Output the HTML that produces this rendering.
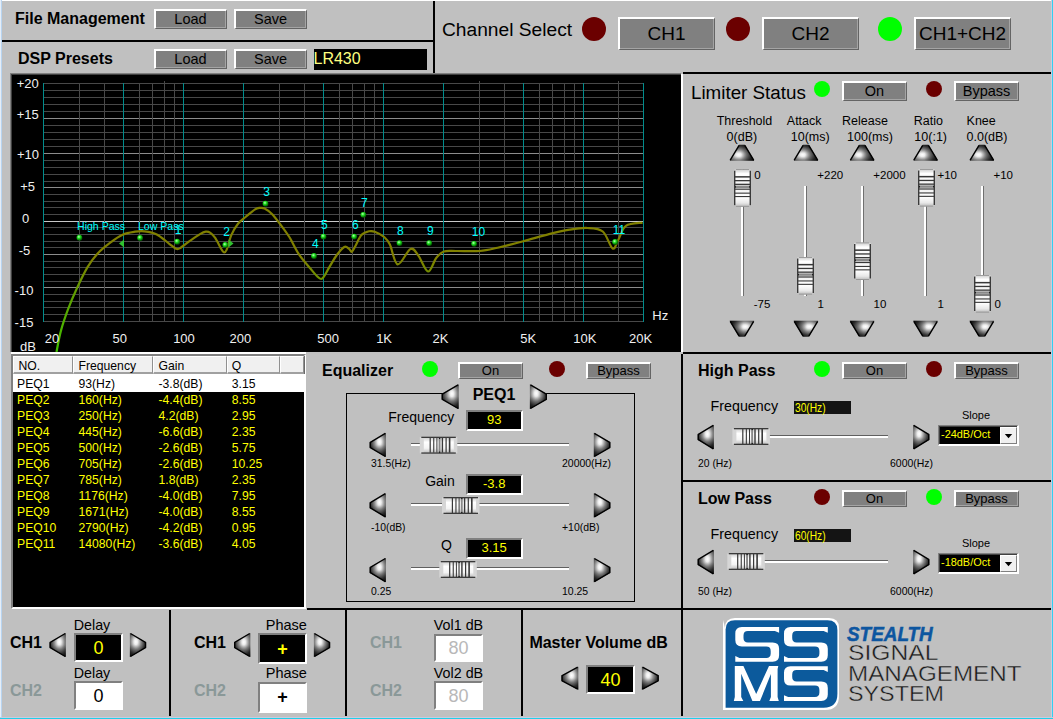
<!DOCTYPE html><html><head><meta charset="utf-8"><style>
html,body{margin:0;padding:0;}
body{width:1053px;height:719px;position:relative;overflow:hidden;background:#c0c0c0;font-family:"Liberation Sans",sans-serif;}
body>div{position:absolute;z-index:2;}
.t{white-space:nowrap;}
svg{position:absolute;left:0;top:0;}
</style></head><body>
<svg width="1053" height="719" style="z-index:1"><rect x="43" y="83" width="601" height="1" fill="#484848"/><rect x="43" y="90" width="601" height="1" fill="#484848"/><rect x="43" y="97" width="601" height="1" fill="#484848"/><rect x="43" y="104" width="601" height="1" fill="#484848"/><rect x="43" y="111" width="601" height="1" fill="#484848"/><rect x="43" y="118" width="601" height="1" fill="#8c8c8c"/><rect x="43" y="125" width="601" height="1" fill="#484848"/><rect x="43" y="132" width="601" height="1" fill="#484848"/><rect x="43" y="139" width="601" height="1" fill="#484848"/><rect x="43" y="146" width="601" height="1" fill="#484848"/><rect x="43" y="153" width="601" height="1" fill="#8c8c8c"/><rect x="43" y="160" width="601" height="1" fill="#484848"/><rect x="43" y="167" width="601" height="1" fill="#484848"/><rect x="43" y="174" width="601" height="1" fill="#484848"/><rect x="43" y="181" width="601" height="1" fill="#484848"/><rect x="43" y="187" width="601" height="1" fill="#8c8c8c"/><rect x="43" y="194" width="601" height="1" fill="#484848"/><rect x="43" y="201" width="601" height="1" fill="#484848"/><rect x="43" y="207" width="601" height="1" fill="#484848"/><rect x="43" y="214" width="601" height="1" fill="#484848"/><rect x="43" y="221" width="601" height="1" fill="#c8c8c8"/><rect x="43" y="227" width="601" height="1" fill="#484848"/><rect x="43" y="234" width="601" height="1" fill="#484848"/><rect x="43" y="241" width="601" height="1" fill="#484848"/><rect x="43" y="247" width="601" height="1" fill="#484848"/><rect x="43" y="254" width="601" height="1" fill="#8c8c8c"/><rect x="43" y="261" width="601" height="1" fill="#484848"/><rect x="43" y="267" width="601" height="1" fill="#484848"/><rect x="43" y="274" width="601" height="1" fill="#484848"/><rect x="43" y="281" width="601" height="1" fill="#484848"/><rect x="43" y="287" width="601" height="1" fill="#8c8c8c"/><rect x="43" y="294" width="601" height="1" fill="#484848"/><rect x="43" y="301" width="601" height="1" fill="#484848"/><rect x="43" y="307" width="601" height="1" fill="#484848"/><rect x="43" y="314" width="601" height="1" fill="#484848"/><rect x="43" y="321" width="601" height="1" fill="#484848"/><rect x="43" y="83" width="1" height="239" fill="#008c8c"/><rect x="79" y="83" width="1" height="239" fill="#484848"/><rect x="104" y="83" width="1" height="239" fill="#484848"/><rect x="123" y="83" width="1" height="239" fill="#008c8c"/><rect x="139" y="83" width="1" height="239" fill="#484848"/><rect x="152" y="83" width="1" height="239" fill="#484848"/><rect x="164" y="83" width="1" height="239" fill="#484848"/><rect x="174" y="83" width="1" height="239" fill="#484848"/><rect x="183" y="83" width="1" height="239" fill="#008c8c"/><rect x="243" y="83" width="1" height="239" fill="#008c8c"/><rect x="279" y="83" width="1" height="239" fill="#484848"/><rect x="304" y="83" width="1" height="239" fill="#484848"/><rect x="323" y="83" width="1" height="239" fill="#008c8c"/><rect x="339" y="83" width="1" height="239" fill="#484848"/><rect x="352" y="83" width="1" height="239" fill="#484848"/><rect x="364" y="83" width="1" height="239" fill="#484848"/><rect x="374" y="83" width="1" height="239" fill="#484848"/><rect x="383" y="83" width="1" height="239" fill="#008c8c"/><rect x="443" y="83" width="1" height="239" fill="#008c8c"/><rect x="479" y="83" width="1" height="239" fill="#484848"/><rect x="504" y="83" width="1" height="239" fill="#484848"/><rect x="523" y="83" width="1" height="239" fill="#008c8c"/><rect x="539" y="83" width="1" height="239" fill="#484848"/><rect x="552" y="83" width="1" height="239" fill="#484848"/><rect x="564" y="83" width="1" height="239" fill="#484848"/><rect x="574" y="83" width="1" height="239" fill="#484848"/><rect x="583" y="83" width="1" height="239" fill="#008c8c"/><rect x="618" y="83" width="1" height="239" fill="#484848"/><rect x="643" y="83" width="1" height="239" fill="#008c8c"/><rect x="164" y="81" width="1" height="2" fill="#484848"/><rect x="479" y="81" width="1" height="2" fill="#484848"/><rect x="618" y="81" width="1" height="2" fill="#484848"/><defs><linearGradient id="cg" x1="0" y1="0" x2="0" y2="1" gradientUnits="objectBoundingBox"><stop offset="0" stop-color="#808000"/><stop offset="0.35" stop-color="#808000"/><stop offset="0.6" stop-color="#60a000"/><stop offset="1" stop-color="#40c000"/></linearGradient></defs><path d="M56.5,351.9 C57.23,348.40 59.00,337.93 60.9,330.9 C62.80,323.87 65.25,316.77 67.9,309.7 C70.55,302.63 73.55,295.55 76.8,288.5 C80.05,281.45 83.88,273.28 87.4,267.4 C90.92,261.52 94.08,257.33 97.9,253.2 C101.72,249.07 106.18,245.68 110.3,242.6 C114.42,239.52 118.48,236.52 122.6,234.7 C126.72,232.88 131.38,232.27 135,231.7 C138.62,231.13 140.67,230.85 144.3,231.3 C147.93,231.75 152.63,232.32 156.8,234.4 C160.97,236.48 166.17,241.47 169.3,243.8 C172.43,246.13 173.87,247.63 175.6,248.4 C177.33,249.17 177.27,249.68 179.7,248.4 C182.13,247.12 186.82,243.08 190.2,240.7 C193.58,238.32 197.42,235.60 200,234.1 C202.58,232.60 203.97,231.92 205.7,231.7 C207.43,231.48 208.82,231.77 210.4,232.8 C211.98,233.83 213.45,235.30 215.2,237.9 C216.95,240.50 219.48,246.02 220.9,248.4 C222.32,250.78 222.75,251.95 223.7,252.2 C224.65,252.45 225.33,252.75 226.6,249.9 C227.87,247.05 229.40,239.47 231.3,235.1 C233.20,230.73 235.62,226.72 238,223.7 C240.38,220.68 242.75,219.38 245.6,217 C248.45,214.62 252.73,210.92 255.1,209.4 C257.47,207.88 258.22,208.05 259.8,207.9 C261.38,207.75 262.53,207.45 264.6,208.5 C266.67,209.55 269.67,211.67 272.2,214.2 C274.73,216.73 276.95,219.90 279.8,223.7 C282.65,227.50 286.13,231.93 289.3,237 C292.47,242.07 295.32,248.88 298.8,254.1 C302.28,259.32 307.03,264.50 310.2,268.3 C313.37,272.10 315.75,275.22 317.8,276.9 C319.85,278.58 320.60,279.98 322.5,278.4 C324.40,276.82 326.82,271.30 329.2,267.4 C331.58,263.50 334.28,258.42 336.8,255 C339.32,251.58 342.25,247.93 344.3,246.9 C346.35,245.87 347.83,247.98 349.1,248.8 C350.37,249.62 350.80,252.35 351.9,251.8 C353.00,251.25 354.12,248.28 355.7,245.5 C357.28,242.72 359.18,237.47 361.4,235.1 C363.62,232.73 366.78,231.87 369,231.3 C371.22,230.73 372.17,230.75 374.7,231.7 C377.23,232.65 381.67,234.85 384.2,237 C386.73,239.15 387.65,240.03 389.9,244.6 C392.15,249.17 394.27,263.67 397.7,264.4 C401.13,265.13 407.08,250.50 410.5,249 C413.92,247.50 415.28,251.65 418.2,255.4 C421.12,259.15 425.00,271.07 428,271.5 C431.00,271.93 433.57,261.33 436.2,258 C438.83,254.67 440.38,252.67 443.8,251.5 C447.22,250.33 450.72,251.08 456.7,251 C462.68,250.92 472.87,251.55 479.7,251 C486.53,250.45 490.43,249.32 497.7,247.7 C504.97,246.08 514.75,243.57 523.3,241.3 C531.85,239.03 541.30,236.03 549,234.1 C556.70,232.17 563.10,230.72 569.5,229.7 C575.90,228.68 581.85,227.70 587.4,228 C592.95,228.30 598.60,228.08 602.8,231.5 C607.00,234.92 610.03,247.08 612.6,248.5 C615.17,249.92 615.98,243.77 618.2,240 C620.42,236.23 621.83,228.80 625.9,225.9 C629.97,223.00 639.82,223.15 642.6,222.6" fill="none" stroke="url(#cg)" stroke-width="2.2" stroke-linejoin="round"/><defs><radialGradient id="sph" cx="0.4" cy="0.35" r="0.6"><stop offset="0" stop-color="#c0ffc0"/><stop offset="0.45" stop-color="#20e020"/><stop offset="1" stop-color="#006000"/></radialGradient></defs><circle cx="79.4" cy="237.7" r="2.9" fill="url(#sph)"/><circle cx="140.1" cy="238" r="2.9" fill="url(#sph)"/><circle cx="177.2" cy="241.7" r="2.9" fill="url(#sph)"/><circle cx="225.3" cy="245" r="2.9" fill="url(#sph)"/><circle cx="265.5" cy="203.7" r="2.9" fill="url(#sph)"/><circle cx="314" cy="256" r="2.9" fill="url(#sph)"/><circle cx="323.5" cy="236.6" r="2.9" fill="url(#sph)"/><circle cx="354.2" cy="236.6" r="2.9" fill="url(#sph)"/><circle cx="363.3" cy="214.8" r="2.9" fill="url(#sph)"/><circle cx="399.5" cy="243.1" r="2.9" fill="url(#sph)"/><circle cx="429.2" cy="243.1" r="2.9" fill="url(#sph)"/><circle cx="474.1" cy="243.8" r="2.9" fill="url(#sph)"/><circle cx="615.1" cy="242" r="2.9" fill="url(#sph)"/><polygon points="119,243.5 124,239.5 124,247.5" fill="#30c030"/><polygon points="233.5,243.6 228.5,239.6 228.5,247.6" fill="#30c030"/></svg>
<div style="left:0px;top:0px;width:1053px;height:1px;background:#fff;"></div><div style="left:0px;top:0px;width:1px;height:719px;background:#e6eef8;"></div><div style="left:1px;top:0px;width:1px;height:719px;background:#b8d4f0;"></div><div style="left:1051px;top:0px;width:1px;height:719px;background:#c8cce0;"></div><div style="left:1052px;top:0px;width:1px;height:719px;background:#30d0f0;"></div><div style="left:0px;top:717px;width:1053px;height:1px;background:#c8cce0;"></div><div style="left:0px;top:718px;width:1053px;height:1px;background:#20d0e8;"></div><div class="t" style="left:15px;top:10.66px;font-size:16px;line-height:16px;font-weight:bold;color:#000;">File Management</div><div style="left:154px;top:9px;width:73px;height:20px;background:#808080;box-sizing:border-box;border-top:2px solid #fff;border-left:2px solid #fff;border-right:1px solid #646464;border-bottom:1px solid #646464;box-shadow:inset -1px -1px 0 #a4a4a4;"></div><div class="t" style="left:-109.5px;width:600px;text-align:center;top:11.95px;font-size:14.5px;line-height:14.5px;color:#000;">Load</div><div style="left:234px;top:9px;width:73px;height:20px;background:#808080;box-sizing:border-box;border-top:2px solid #fff;border-left:2px solid #fff;border-right:1px solid #646464;border-bottom:1px solid #646464;box-shadow:inset -1px -1px 0 #a4a4a4;"></div><div class="t" style="left:-29.5px;width:600px;text-align:center;top:11.95px;font-size:14.5px;line-height:14.5px;color:#000;">Save</div><div style="left:2px;top:40px;width:431px;height:2px;background:#000;"></div><div class="t" style="left:18px;top:50.76px;font-size:16px;line-height:16px;font-weight:bold;color:#000;">DSP Presets</div><div style="left:154px;top:49px;width:73px;height:20px;background:#808080;box-sizing:border-box;border-top:2px solid #fff;border-left:2px solid #fff;border-right:1px solid #646464;border-bottom:1px solid #646464;box-shadow:inset -1px -1px 0 #a4a4a4;"></div><div class="t" style="left:-109.5px;width:600px;text-align:center;top:51.95px;font-size:14.5px;line-height:14.5px;color:#000;">Load</div><div style="left:234px;top:49px;width:73px;height:20px;background:#808080;box-sizing:border-box;border-top:2px solid #fff;border-left:2px solid #fff;border-right:1px solid #646464;border-bottom:1px solid #646464;box-shadow:inset -1px -1px 0 #a4a4a4;"></div><div class="t" style="left:-29.5px;width:600px;text-align:center;top:51.95px;font-size:14.5px;line-height:14.5px;color:#000;">Save</div><div style="left:314px;top:49px;width:113px;height:21px;background:#000;"></div><div class="t" style="left:313.5px;top:50.96px;font-size:16px;line-height:16px;color:#ffff80;">LR430</div><div style="left:433px;top:1px;width:2px;height:72px;background:#000;"></div><div class="t" style="left:442px;top:20.35px;font-size:19.2px;line-height:19.2px;color:#000;">Channel Select</div><div style="left:582.0px;top:17.0px;width:24px;height:24px;border-radius:50%;background:#6b0000;"></div><div style="left:618px;top:17px;width:97px;height:33px;background:#808080;box-sizing:border-box;border-top:2px solid #fff;border-left:2px solid #fff;border-right:1px solid #646464;border-bottom:1px solid #646464;box-shadow:inset -1px -1px 0 #a4a4a4;"></div><div class="t" style="left:366.5px;width:600px;text-align:center;top:24.26px;font-size:19px;line-height:19px;color:#000;">CH1</div><div style="left:726.0px;top:17.0px;width:24px;height:24px;border-radius:50%;background:#6b0000;"></div><div style="left:762px;top:17px;width:97px;height:33px;background:#808080;box-sizing:border-box;border-top:2px solid #fff;border-left:2px solid #fff;border-right:1px solid #646464;border-bottom:1px solid #646464;box-shadow:inset -1px -1px 0 #a4a4a4;"></div><div class="t" style="left:510.5px;width:600px;text-align:center;top:24.26px;font-size:19px;line-height:19px;color:#000;">CH2</div><div style="left:878.0px;top:17.0px;width:24px;height:24px;border-radius:50%;background:#00ff00;"></div><div style="left:914px;top:17px;width:97px;height:33px;background:#808080;box-sizing:border-box;border-top:2px solid #fff;border-left:2px solid #fff;border-right:1px solid #646464;border-bottom:1px solid #646464;box-shadow:inset -1px -1px 0 #a4a4a4;"></div><div class="t" style="left:662.5px;width:600px;text-align:center;top:24.26px;font-size:19px;line-height:19px;color:#000;">CH1+CH2</div><div style="left:683px;top:72px;width:368px;height:2px;background:#000;"></div><div style="left:10px;top:73px;width:671px;height:279px;z-index:0;background:#000;box-shadow:inset 1px 1px 0 #808080, inset 2px 2px 0 #404040;"></div><div class="t" style="left:-272.2px;width:600px;text-align:center;top:76.50px;font-size:13px;line-height:13px;color:#f0f0f0;">+20</div><div class="t" style="left:-272.2px;width:600px;text-align:center;top:108.30px;font-size:13px;line-height:13px;color:#f0f0f0;">+15</div><div class="t" style="left:-272px;width:600px;text-align:center;top:147.50px;font-size:13px;line-height:13px;color:#f0f0f0;">+10</div><div class="t" style="left:-272.4px;width:600px;text-align:center;top:179.50px;font-size:13px;line-height:13px;color:#f0f0f0;">+5</div><div class="t" style="left:-274.5px;width:600px;text-align:center;top:211.50px;font-size:13px;line-height:13px;color:#f0f0f0;">0</div><div class="t" style="left:-275.5px;width:600px;text-align:center;top:243.80px;font-size:13px;line-height:13px;color:#f0f0f0;">-5</div><div class="t" style="left:-276px;width:600px;text-align:center;top:283.70px;font-size:13px;line-height:13px;color:#f0f0f0;">-10</div><div class="t" style="left:-276px;width:600px;text-align:center;top:316.30px;font-size:13px;line-height:13px;color:#f0f0f0;">-15</div><div class="t" style="left:-272px;width:600px;text-align:center;top:340.00px;font-size:13px;line-height:13px;color:#f0f0f0;">dB</div><div class="t" style="left:-248px;width:600px;text-align:center;top:332.00px;font-size:13px;line-height:13px;color:#f0f0f0;">20</div><div class="t" style="left:-180.3px;width:600px;text-align:center;top:332.00px;font-size:13px;line-height:13px;color:#f0f0f0;">50</div><div class="t" style="left:-116px;width:600px;text-align:center;top:332.00px;font-size:13px;line-height:13px;color:#f0f0f0;">100</div><div class="t" style="left:-59.69999999999999px;width:600px;text-align:center;top:332.00px;font-size:13px;line-height:13px;color:#f0f0f0;">200</div><div class="t" style="left:28.19999999999999px;width:600px;text-align:center;top:332.00px;font-size:13px;line-height:13px;color:#f0f0f0;">500</div><div class="t" style="left:84.10000000000002px;width:600px;text-align:center;top:332.00px;font-size:13px;line-height:13px;color:#f0f0f0;">1K</div><div class="t" style="left:140.5px;width:600px;text-align:center;top:332.00px;font-size:13px;line-height:13px;color:#f0f0f0;">2K</div><div class="t" style="left:228.20000000000005px;width:600px;text-align:center;top:332.00px;font-size:13px;line-height:13px;color:#f0f0f0;">5K</div><div class="t" style="left:284.9px;width:600px;text-align:center;top:332.00px;font-size:13px;line-height:13px;color:#f0f0f0;">10K</div><div class="t" style="left:340.5px;width:600px;text-align:center;top:332.00px;font-size:13px;line-height:13px;color:#f0f0f0;">20K</div><div class="t" style="left:360.29999999999995px;width:600px;text-align:center;top:308.50px;font-size:13px;line-height:13px;color:#f0f0f0;">Hz</div><div class="t" style="left:-122px;width:600px;text-align:center;top:223.64px;font-size:12px;line-height:12px;color:#00ffff;">1</div><div class="t" style="left:-73.4px;width:600px;text-align:center;top:226.34px;font-size:12px;line-height:12px;color:#00ffff;">2</div><div class="t" style="left:-33.5px;width:600px;text-align:center;top:185.94px;font-size:12px;line-height:12px;color:#00ffff;">3</div><div class="t" style="left:15.300000000000011px;width:600px;text-align:center;top:237.74px;font-size:12px;line-height:12px;color:#00ffff;">4</div><div class="t" style="left:24.399999999999977px;width:600px;text-align:center;top:218.74px;font-size:12px;line-height:12px;color:#00ffff;">5</div><div class="t" style="left:55.39999999999998px;width:600px;text-align:center;top:219.14px;font-size:12px;line-height:12px;color:#00ffff;">6</div><div class="t" style="left:64.30000000000001px;width:600px;text-align:center;top:196.54px;font-size:12px;line-height:12px;color:#00ffff;">7</div><div class="t" style="left:100.30000000000001px;width:600px;text-align:center;top:224.64px;font-size:12px;line-height:12px;color:#00ffff;">8</div><div class="t" style="left:130.3px;width:600px;text-align:center;top:224.64px;font-size:12px;line-height:12px;color:#00ffff;">9</div><div class="t" style="left:178.5px;width:600px;text-align:center;top:225.64px;font-size:12px;line-height:12px;color:#00ffff;">10</div><div class="t" style="left:319px;width:600px;text-align:center;top:223.84px;font-size:12px;line-height:12px;color:#00ffff;">11</div><div class="t" style="left:77px;top:221.19px;font-size:11px;line-height:11px;color:#00ffff;transform:scaleX(0.96);transform-origin:left;">High Pass</div><div class="t" style="left:138px;top:221.19px;font-size:11px;line-height:11px;color:#00ffff;transform:scaleX(0.96);transform-origin:left;">Low Pass</div><div style="left:681px;top:74px;width:2px;height:278px;background:#fff;"></div><div class="t" style="left:691px;top:83.69px;font-size:18.8px;line-height:18.8px;color:#000;">Limiter Status</div><div style="left:814.0px;top:81.0px;width:16px;height:16px;border-radius:50%;background:#00ff00;"></div><div style="left:842px;top:81px;width:65px;height:20px;background:#808080;box-sizing:border-box;border-top:2px solid #fff;border-left:2px solid #fff;border-right:1px solid #646464;border-bottom:1px solid #646464;box-shadow:inset -1px -1px 0 #a4a4a4;"></div><div class="t" style="left:574.5px;width:600px;text-align:center;top:83.95px;font-size:14.5px;line-height:14.5px;color:#000;">On</div><div style="left:926.0px;top:81.0px;width:16px;height:16px;border-radius:50%;background:#6b0000;"></div><div style="left:954px;top:81px;width:65px;height:20px;background:#808080;box-sizing:border-box;border-top:2px solid #fff;border-left:2px solid #fff;border-right:1px solid #646464;border-bottom:1px solid #646464;box-shadow:inset -1px -1px 0 #a4a4a4;"></div><div class="t" style="left:686.5px;width:600px;text-align:center;top:83.95px;font-size:14.5px;line-height:14.5px;color:#000;">Bypass</div><div style="left:683px;top:352px;width:368px;height:2px;background:#000;"></div><div style="left:11px;top:354px;width:295px;height:255px;background:#000;box-sizing:border-box;border-top:2px solid #808080;border-left:2px solid #808080;border-right:2px solid #fff;border-bottom:2px solid #fff;"></div><div style="left:306px;top:352px;width:375px;height:256px;"></div><div style="left:11px;top:352px;width:295px;height:2px;background:#fff;"></div><div style="left:681px;top:354px;width:2px;height:256px;background:#000;"></div><div style="left:683px;top:480px;width:368px;height:2px;background:#000;"></div><div style="left:307px;top:608px;width:744px;height:2px;background:#000;"></div><div style="left:169px;top:610px;width:2px;height:106px;background:#000;"></div><div style="left:345px;top:610px;width:2px;height:106px;background:#000;"></div><div style="left:521px;top:610px;width:2px;height:106px;background:#000;"></div><div style="left:681px;top:610px;width:2px;height:106px;background:#000;"></div><div class="t" style="left:444.5px;width:600px;text-align:center;top:115.02px;font-size:12.5px;line-height:12.5px;color:#000;">Threshold</div><div class="t" style="left:441.9px;width:600px;text-align:center;top:130.82px;font-size:12.5px;line-height:12.5px;color:#000;">0(dB)</div><div class="t" style="left:504.20000000000005px;width:600px;text-align:center;top:115.02px;font-size:12.5px;line-height:12.5px;color:#000;">Attack</div><div class="t" style="left:510.20000000000005px;width:600px;text-align:center;top:130.82px;font-size:12.5px;line-height:12.5px;color:#000;">10(ms)</div><div class="t" style="left:565px;width:600px;text-align:center;top:115.02px;font-size:12.5px;line-height:12.5px;color:#000;">Release</div><div class="t" style="left:570px;width:600px;text-align:center;top:130.82px;font-size:12.5px;line-height:12.5px;color:#000;">100(ms)</div><div class="t" style="left:628.3px;width:600px;text-align:center;top:115.02px;font-size:12.5px;line-height:12.5px;color:#000;">Ratio</div><div class="t" style="left:630.7px;width:600px;text-align:center;top:130.82px;font-size:12.5px;line-height:12.5px;color:#000;">10(:1)</div><div class="t" style="left:681.2px;width:600px;text-align:center;top:115.02px;font-size:12.5px;line-height:12.5px;color:#000;">Knee</div><div class="t" style="left:687px;width:600px;text-align:center;top:130.82px;font-size:12.5px;line-height:12.5px;color:#000;">0.0(dB)</div><div style="left:741px;top:169px;width:2px;height:127px;background:#fff;box-shadow:1px 0 0 #707070;"></div><div style="left:804px;top:186px;width:2px;height:110px;background:#fff;box-shadow:1px 0 0 #707070;"></div><div style="left:861px;top:186px;width:2px;height:110px;background:#fff;box-shadow:1px 0 0 #707070;"></div><div style="left:924px;top:169px;width:2px;height:127px;background:#fff;box-shadow:1px 0 0 #707070;"></div><div style="left:981px;top:186px;width:2px;height:110px;background:#fff;box-shadow:1px 0 0 #707070;"></div><div class="t" style="left:457.4px;width:600px;text-align:center;top:170.27px;font-size:11.5px;line-height:11.5px;color:#000;">0</div><div class="t" style="left:530.3px;width:600px;text-align:center;top:170.27px;font-size:11.5px;line-height:11.5px;color:#000;">+220</div><div class="t" style="left:589.5px;width:600px;text-align:center;top:170.27px;font-size:11.5px;line-height:11.5px;color:#000;">+2000</div><div class="t" style="left:647.2px;width:600px;text-align:center;top:170.27px;font-size:11.5px;line-height:11.5px;color:#000;">+10</div><div class="t" style="left:703.2px;width:600px;text-align:center;top:170.27px;font-size:11.5px;line-height:11.5px;color:#000;">+10</div><div class="t" style="left:462px;width:600px;text-align:center;top:298.77px;font-size:11.5px;line-height:11.5px;color:#000;">-75</div><div class="t" style="left:520.8px;width:600px;text-align:center;top:298.77px;font-size:11.5px;line-height:11.5px;color:#000;">1</div><div class="t" style="left:580px;width:600px;text-align:center;top:298.77px;font-size:11.5px;line-height:11.5px;color:#000;">10</div><div class="t" style="left:640.6px;width:600px;text-align:center;top:298.77px;font-size:11.5px;line-height:11.5px;color:#000;">1</div><div class="t" style="left:697.6px;width:600px;text-align:center;top:298.77px;font-size:11.5px;line-height:11.5px;color:#000;">0</div><div style="left:13px;top:356px;width:291px;height:18px;background:#f0f0f0;"></div><div style="left:13px;top:356px;width:60px;height:18px;background:#f0f0f0;box-sizing:border-box;border-top:1px solid #fff;border-left:1px solid #fff;border-right:1px solid #909090;border-bottom:2px solid #a0a0a0;box-shadow:1px 0 0 #696969;"></div><div style="left:73px;top:356px;width:80px;height:18px;background:#f0f0f0;box-sizing:border-box;border-top:1px solid #fff;border-left:1px solid #fff;border-right:1px solid #909090;border-bottom:2px solid #a0a0a0;box-shadow:1px 0 0 #696969;"></div><div style="left:153px;top:356px;width:74px;height:18px;background:#f0f0f0;box-sizing:border-box;border-top:1px solid #fff;border-left:1px solid #fff;border-right:1px solid #909090;border-bottom:2px solid #a0a0a0;box-shadow:1px 0 0 #696969;"></div><div style="left:227px;top:356px;width:52.5px;height:18px;background:#f0f0f0;box-sizing:border-box;border-top:1px solid #fff;border-left:1px solid #fff;border-right:1px solid #909090;border-bottom:2px solid #a0a0a0;box-shadow:1px 0 0 #696969;"></div><div style="left:279.5px;top:356px;width:24.5px;height:18px;background:#f0f0f0;box-sizing:border-box;border-top:1px solid #fff;border-left:1px solid #fff;border-right:1px solid #909090;border-bottom:2px solid #a0a0a0;box-shadow:1px 0 0 #696969;"></div><div style="left:13px;top:374px;width:291px;height:18px;background:#fff;"></div><div class="t" style="left:18.5px;top:359.97px;font-size:12.2px;line-height:12.2px;color:#000;">NO.</div><div class="t" style="left:78.5px;top:359.97px;font-size:12.2px;line-height:12.2px;color:#000;">Frequency</div><div class="t" style="left:158.6px;top:359.97px;font-size:12.2px;line-height:12.2px;color:#000;">Gain</div><div class="t" style="left:231.8px;top:359.97px;font-size:12.2px;line-height:12.2px;color:#000;">Q</div><div class="t" style="left:17.0px;top:378.27px;font-size:12.2px;line-height:12.2px;color:#000;">PEQ1</div><div class="t" style="left:78.5px;top:378.27px;font-size:12.2px;line-height:12.2px;color:#000;">93(Hz)</div><div class="t" style="left:158.5px;top:378.27px;font-size:12.2px;line-height:12.2px;color:#000;">-3.8(dB)</div><div class="t" style="left:231.8px;top:378.27px;font-size:12.2px;line-height:12.2px;color:#000;">3.15</div><div class="t" style="left:17.0px;top:394.27px;font-size:12.2px;line-height:12.2px;color:#ffff00;">PEQ2</div><div class="t" style="left:78.5px;top:394.27px;font-size:12.2px;line-height:12.2px;color:#ffff00;">160(Hz)</div><div class="t" style="left:158.5px;top:394.27px;font-size:12.2px;line-height:12.2px;color:#ffff00;">-4.4(dB)</div><div class="t" style="left:231.8px;top:394.27px;font-size:12.2px;line-height:12.2px;color:#ffff00;">8.55</div><div class="t" style="left:17.0px;top:410.27px;font-size:12.2px;line-height:12.2px;color:#ffff00;">PEQ3</div><div class="t" style="left:78.5px;top:410.27px;font-size:12.2px;line-height:12.2px;color:#ffff00;">250(Hz)</div><div class="t" style="left:158.5px;top:410.27px;font-size:12.2px;line-height:12.2px;color:#ffff00;">4.2(dB)</div><div class="t" style="left:231.8px;top:410.27px;font-size:12.2px;line-height:12.2px;color:#ffff00;">2.95</div><div class="t" style="left:17.0px;top:426.27px;font-size:12.2px;line-height:12.2px;color:#ffff00;">PEQ4</div><div class="t" style="left:78.5px;top:426.27px;font-size:12.2px;line-height:12.2px;color:#ffff00;">445(Hz)</div><div class="t" style="left:158.5px;top:426.27px;font-size:12.2px;line-height:12.2px;color:#ffff00;">-6.6(dB)</div><div class="t" style="left:231.8px;top:426.27px;font-size:12.2px;line-height:12.2px;color:#ffff00;">2.35</div><div class="t" style="left:17.0px;top:442.27px;font-size:12.2px;line-height:12.2px;color:#ffff00;">PEQ5</div><div class="t" style="left:78.5px;top:442.27px;font-size:12.2px;line-height:12.2px;color:#ffff00;">500(Hz)</div><div class="t" style="left:158.5px;top:442.27px;font-size:12.2px;line-height:12.2px;color:#ffff00;">-2.6(dB)</div><div class="t" style="left:231.8px;top:442.27px;font-size:12.2px;line-height:12.2px;color:#ffff00;">5.75</div><div class="t" style="left:17.0px;top:458.27px;font-size:12.2px;line-height:12.2px;color:#ffff00;">PEQ6</div><div class="t" style="left:78.5px;top:458.27px;font-size:12.2px;line-height:12.2px;color:#ffff00;">705(Hz)</div><div class="t" style="left:158.5px;top:458.27px;font-size:12.2px;line-height:12.2px;color:#ffff00;">-2.6(dB)</div><div class="t" style="left:231.8px;top:458.27px;font-size:12.2px;line-height:12.2px;color:#ffff00;">10.25</div><div class="t" style="left:17.0px;top:474.27px;font-size:12.2px;line-height:12.2px;color:#ffff00;">PEQ7</div><div class="t" style="left:78.5px;top:474.27px;font-size:12.2px;line-height:12.2px;color:#ffff00;">785(Hz)</div><div class="t" style="left:158.5px;top:474.27px;font-size:12.2px;line-height:12.2px;color:#ffff00;">1.8(dB)</div><div class="t" style="left:231.8px;top:474.27px;font-size:12.2px;line-height:12.2px;color:#ffff00;">2.35</div><div class="t" style="left:17.0px;top:490.27px;font-size:12.2px;line-height:12.2px;color:#ffff00;">PEQ8</div><div class="t" style="left:78.5px;top:490.27px;font-size:12.2px;line-height:12.2px;color:#ffff00;">1176(Hz)</div><div class="t" style="left:158.5px;top:490.27px;font-size:12.2px;line-height:12.2px;color:#ffff00;">-4.0(dB)</div><div class="t" style="left:231.8px;top:490.27px;font-size:12.2px;line-height:12.2px;color:#ffff00;">7.95</div><div class="t" style="left:17.0px;top:506.27px;font-size:12.2px;line-height:12.2px;color:#ffff00;">PEQ9</div><div class="t" style="left:78.5px;top:506.27px;font-size:12.2px;line-height:12.2px;color:#ffff00;">1671(Hz)</div><div class="t" style="left:158.5px;top:506.27px;font-size:12.2px;line-height:12.2px;color:#ffff00;">-4.0(dB)</div><div class="t" style="left:231.8px;top:506.27px;font-size:12.2px;line-height:12.2px;color:#ffff00;">8.55</div><div class="t" style="left:17.0px;top:522.27px;font-size:12.2px;line-height:12.2px;color:#ffff00;">PEQ10</div><div class="t" style="left:78.5px;top:522.27px;font-size:12.2px;line-height:12.2px;color:#ffff00;">2790(Hz)</div><div class="t" style="left:158.5px;top:522.27px;font-size:12.2px;line-height:12.2px;color:#ffff00;">-4.2(dB)</div><div class="t" style="left:231.8px;top:522.27px;font-size:12.2px;line-height:12.2px;color:#ffff00;">0.95</div><div class="t" style="left:17.0px;top:538.27px;font-size:12.2px;line-height:12.2px;color:#ffff00;">PEQ11</div><div class="t" style="left:78.5px;top:538.27px;font-size:12.2px;line-height:12.2px;color:#ffff00;">14080(Hz)</div><div class="t" style="left:158.5px;top:538.27px;font-size:12.2px;line-height:12.2px;color:#ffff00;">-3.6(dB)</div><div class="t" style="left:231.8px;top:538.27px;font-size:12.2px;line-height:12.2px;color:#ffff00;">4.05</div><div class="t" style="left:322px;top:363.06px;font-size:16px;line-height:16px;font-weight:bold;color:#000;">Equalizer</div><div style="left:421.7px;top:361.2px;width:16px;height:16px;border-radius:50%;background:#00ff00;"></div><div style="left:458px;top:361.5px;width:65px;height:17px;background:#808080;box-sizing:border-box;border-top:2px solid #fff;border-left:2px solid #fff;border-right:1px solid #646464;border-bottom:1px solid #646464;box-shadow:inset -1px -1px 0 #a4a4a4;"></div><div class="t" style="left:190.5px;width:600px;text-align:center;top:363.68px;font-size:13px;line-height:13px;color:#000;">On</div><div style="left:549.3px;top:361.2px;width:16px;height:16px;border-radius:50%;background:#6b0000;"></div><div style="left:586px;top:361.5px;width:65px;height:17px;background:#808080;box-sizing:border-box;border-top:2px solid #fff;border-left:2px solid #fff;border-right:1px solid #646464;border-bottom:1px solid #646464;box-shadow:inset -1px -1px 0 #a4a4a4;"></div><div class="t" style="left:318.5px;width:600px;text-align:center;top:363.68px;font-size:13px;line-height:13px;color:#000;">Bypass</div><div style="left:346px;top:393px;width:289px;height:209px;box-sizing:border-box;border:1px solid #000;"></div><div style="left:457px;top:388px;width:74px;height:12px;background:#c0c0c0;"></div><div class="t" style="left:194px;width:600px;text-align:center;top:387.06px;font-size:16px;line-height:16px;font-weight:bold;color:#000;">PEQ1</div><div class="t" style="left:388.2px;top:410.35px;font-size:14px;line-height:14px;color:#000;">Frequency</div><div style="left:465.7px;top:409.7px;width:57px;height:21px;background:#000;box-sizing:border-box;border-top:2px solid #808080;border-left:2px solid #808080;border-right:2px solid #fff;border-bottom:2px solid #fff;"></div><div class="t" style="left:194.2px;width:600px;text-align:center;top:412.88px;font-size:13px;line-height:13px;color:#ffff00;">93</div><div style="left:411px;top:443px;width:158px;height:1px;background:#606060;"></div><div style="left:411px;top:444px;width:158px;height:2px;background:#fff;"></div><div class="t" style="left:370.5px;top:458.37px;font-size:11.5px;line-height:11.5px;color:#000;transform:scaleX(0.9);transform-origin:left;">31.5(Hz)</div><div class="t" style="left:562px;top:458.37px;font-size:11.5px;line-height:11.5px;color:#000;transform:scaleX(0.91);transform-origin:left;">20000(Hz)</div><div class="t" style="left:425.2px;top:474.35px;font-size:14px;line-height:14px;color:#000;">Gain</div><div style="left:465.7px;top:473.7px;width:57px;height:21px;background:#000;box-sizing:border-box;border-top:2px solid #808080;border-left:2px solid #808080;border-right:2px solid #fff;border-bottom:2px solid #fff;"></div><div class="t" style="left:194.2px;width:600px;text-align:center;top:476.88px;font-size:13px;line-height:13px;color:#ffff00;">-3.8</div><div style="left:411px;top:503.3px;width:158px;height:1px;background:#606060;"></div><div style="left:411px;top:504.3px;width:158px;height:2px;background:#fff;"></div><div class="t" style="left:370.5px;top:522.37px;font-size:11.5px;line-height:11.5px;color:#000;transform:scaleX(0.9);transform-origin:left;">-10(dB)</div><div class="t" style="left:562px;top:522.37px;font-size:11.5px;line-height:11.5px;color:#000;transform:scaleX(0.91);transform-origin:left;">+10(dB)</div><div class="t" style="left:441px;top:538.35px;font-size:14px;line-height:14px;color:#000;">Q</div><div style="left:465.7px;top:537.7px;width:57px;height:21px;background:#000;box-sizing:border-box;border-top:2px solid #808080;border-left:2px solid #808080;border-right:2px solid #fff;border-bottom:2px solid #fff;"></div><div class="t" style="left:194.2px;width:600px;text-align:center;top:540.88px;font-size:13px;line-height:13px;color:#ffff00;">3.15</div><div style="left:411px;top:566.7px;width:158px;height:1px;background:#606060;"></div><div style="left:411px;top:567.7px;width:158px;height:2px;background:#fff;"></div><div class="t" style="left:370.5px;top:586.27px;font-size:11.5px;line-height:11.5px;color:#000;transform:scaleX(0.9);transform-origin:left;">0.25</div><div class="t" style="left:562px;top:586.27px;font-size:11.5px;line-height:11.5px;color:#000;transform:scaleX(0.91);transform-origin:left;">10.25</div><div class="t" style="left:698px;top:363.26px;font-size:16px;line-height:16px;font-weight:bold;color:#000;">High Pass</div><div style="left:813.8px;top:361.0px;width:16px;height:16px;border-radius:50%;background:#00ff00;"></div><div style="left:842px;top:361.5px;width:65px;height:17px;background:#808080;box-sizing:border-box;border-top:2px solid #fff;border-left:2px solid #fff;border-right:1px solid #646464;border-bottom:1px solid #646464;box-shadow:inset -1px -1px 0 #a4a4a4;"></div><div class="t" style="left:574.5px;width:600px;text-align:center;top:363.68px;font-size:13px;line-height:13px;color:#000;">On</div><div style="left:925.5px;top:361.0px;width:16px;height:16px;border-radius:50%;background:#6b0000;"></div><div style="left:954px;top:361.5px;width:65px;height:17px;background:#808080;box-sizing:border-box;border-top:2px solid #fff;border-left:2px solid #fff;border-right:1px solid #646464;border-bottom:1px solid #646464;box-shadow:inset -1px -1px 0 #a4a4a4;"></div><div class="t" style="left:686.5px;width:600px;text-align:center;top:363.68px;font-size:13px;line-height:13px;color:#000;">Bypass</div><div class="t" style="left:710.5px;top:398.60px;font-size:14.3px;line-height:14.3px;color:#000;">Frequency</div><div style="left:794px;top:401px;width:57px;height:13px;background:#141414;"></div><div class="t" style="left:795px;top:401.84px;font-size:12px;line-height:12px;color:#ffff00;transform:scaleX(0.85);transform-origin:left;">30(Hz)</div><div class="t" style="left:698px;top:491.26px;font-size:16px;line-height:16px;font-weight:bold;color:#000;">Low Pass</div><div style="left:813.8px;top:489.0px;width:16px;height:16px;border-radius:50%;background:#6b0000;"></div><div style="left:842px;top:489.5px;width:65px;height:17px;background:#808080;box-sizing:border-box;border-top:2px solid #fff;border-left:2px solid #fff;border-right:1px solid #646464;border-bottom:1px solid #646464;box-shadow:inset -1px -1px 0 #a4a4a4;"></div><div class="t" style="left:574.5px;width:600px;text-align:center;top:491.68px;font-size:13px;line-height:13px;color:#000;">On</div><div style="left:925.5px;top:489.0px;width:16px;height:16px;border-radius:50%;background:#00ff00;"></div><div style="left:954px;top:489.5px;width:65px;height:17px;background:#808080;box-sizing:border-box;border-top:2px solid #fff;border-left:2px solid #fff;border-right:1px solid #646464;border-bottom:1px solid #646464;box-shadow:inset -1px -1px 0 #a4a4a4;"></div><div class="t" style="left:686.5px;width:600px;text-align:center;top:491.68px;font-size:13px;line-height:13px;color:#000;">Bypass</div><div class="t" style="left:710.5px;top:526.60px;font-size:14.3px;line-height:14.3px;color:#000;">Frequency</div><div style="left:794px;top:529px;width:57px;height:13px;background:#141414;"></div><div class="t" style="left:795px;top:529.84px;font-size:12px;line-height:12px;color:#ffff00;transform:scaleX(0.85);transform-origin:left;">60(Hz)</div><div style="left:769.4px;top:434.5px;width:118.60000000000002px;height:1px;background:#606060;"></div><div style="left:769.4px;top:435.5px;width:118.60000000000002px;height:2px;background:#fff;"></div><div style="left:764.3px;top:559.5px;width:123.70000000000005px;height:1px;background:#606060;"></div><div style="left:764.3px;top:560.5px;width:123.70000000000005px;height:2px;background:#fff;"></div><div class="t" style="left:698px;top:457.87px;font-size:11.5px;line-height:11.5px;color:#000;transform:scaleX(0.9);transform-origin:left;">20 (Hz)</div><div class="t" style="left:890px;top:457.87px;font-size:11.5px;line-height:11.5px;color:#000;transform:scaleX(0.91);transform-origin:left;">6000(Hz)</div><div class="t" style="left:676px;width:600px;text-align:center;top:410.39px;font-size:11px;line-height:11px;color:#000;">Slope</div><div style="left:938px;top:425px;width:81px;height:21px;background:#000;box-sizing:border-box;border-top:1px solid #808080;border-left:1px solid #808080;border-right:2px solid #fff;border-bottom:2px solid #fff;box-shadow:inset 1px 1px 0 #404040;"></div><div style="left:1000px;top:427px;width:16.5px;height:17px;background:#f0f0f0;box-sizing:border-box;border-top:1px solid #fff;border-left:1px solid #fff;border-right:1px solid #808080;border-bottom:1px solid #808080;"></div><div class="t" style="left:940.5px;top:429.47px;font-size:11.5px;line-height:11.5px;color:#ffff00;transform:scaleX(0.95);transform-origin:left;">-24dB/Oct</div><div class="t" style="left:698px;top:585.87px;font-size:11.5px;line-height:11.5px;color:#000;transform:scaleX(0.9);transform-origin:left;">50 (Hz)</div><div class="t" style="left:890px;top:585.87px;font-size:11.5px;line-height:11.5px;color:#000;transform:scaleX(0.91);transform-origin:left;">6000(Hz)</div><div class="t" style="left:676px;width:600px;text-align:center;top:538.39px;font-size:11px;line-height:11px;color:#000;">Slope</div><div style="left:938px;top:553px;width:81px;height:21px;background:#000;box-sizing:border-box;border-top:1px solid #808080;border-left:1px solid #808080;border-right:2px solid #fff;border-bottom:2px solid #fff;box-shadow:inset 1px 1px 0 #404040;"></div><div style="left:1000px;top:555px;width:16.5px;height:17px;background:#f0f0f0;box-sizing:border-box;border-top:1px solid #fff;border-left:1px solid #fff;border-right:1px solid #808080;border-bottom:1px solid #808080;"></div><div class="t" style="left:940.5px;top:557.47px;font-size:11.5px;line-height:11.5px;color:#ffff00;transform:scaleX(0.95);transform-origin:left;">-18dB/Oct</div><div class="t" style="left:10px;top:634.96px;font-size:16px;line-height:16px;font-weight:bold;color:#000;">CH1</div><div class="t" style="left:10px;top:683.16px;font-size:16px;line-height:16px;font-weight:bold;color:#8a9898;">CH2</div><div class="t" style="left:-208px;width:600px;text-align:center;top:618.30px;font-size:14.3px;line-height:14.3px;color:#000;">Delay</div><div class="t" style="left:-208px;width:600px;text-align:center;top:666.20px;font-size:14.3px;line-height:14.3px;color:#000;">Delay</div><div style="left:74.4px;top:633.3px;width:48.3px;height:29.1px;background:#000;box-sizing:border-box;border-top:2px solid #808080;border-left:2px solid #808080;border-right:2px solid #fff;border-bottom:2px solid #fff;"></div><div class="t" style="left:-201.45px;width:600px;text-align:center;top:639.09px;font-size:18px;line-height:18px;color:#ffff00;">0</div><div style="left:74.4px;top:681.2px;width:48.3px;height:29.1px;background:#fff;box-sizing:border-box;border-top:2px solid #808080;border-left:2px solid #808080;border-right:2px solid #fff;border-bottom:2px solid #fff;"></div><div class="t" style="left:-201.45px;width:600px;text-align:center;top:686.99px;font-size:18px;line-height:18px;color:#000;">0</div><div class="t" style="left:194px;top:634.96px;font-size:16px;line-height:16px;font-weight:bold;color:#000;">CH1</div><div class="t" style="left:194px;top:683.16px;font-size:16px;line-height:16px;font-weight:bold;color:#8a9898;">CH2</div><div class="t" style="left:-13.699999999999989px;width:600px;text-align:center;top:618.13px;font-size:14.5px;line-height:14.5px;color:#000;">Phase</div><div class="t" style="left:-13.699999999999989px;width:600px;text-align:center;top:666.03px;font-size:14.5px;line-height:14.5px;color:#000;">Phase</div><div style="left:258px;top:633.3px;width:48.8px;height:30.8px;background:#000;box-sizing:border-box;border-top:2px solid #808080;border-left:2px solid #808080;border-right:2px solid #fff;border-bottom:2px solid #fff;"></div><div class="t" style="left:-17.600000000000023px;width:600px;text-align:center;top:639.94px;font-size:18px;line-height:18px;font-weight:bold;color:#ffff00;">+</div><div style="left:258px;top:681.5px;width:48.8px;height:31px;background:#fff;box-sizing:border-box;border-top:2px solid #808080;border-left:2px solid #808080;border-right:2px solid #fff;border-bottom:2px solid #fff;"></div><div class="t" style="left:-17.600000000000023px;width:600px;text-align:center;top:688.24px;font-size:18px;line-height:18px;font-weight:bold;color:#000;">+</div><div class="t" style="left:370px;top:634.96px;font-size:16px;line-height:16px;font-weight:bold;color:#8a9898;">CH1</div><div class="t" style="left:370px;top:683.16px;font-size:16px;line-height:16px;font-weight:bold;color:#8a9898;">CH2</div><div class="t" style="left:158.5px;width:600px;text-align:center;top:617.90px;font-size:14.3px;line-height:14.3px;color:#000;">Vol1 dB</div><div class="t" style="left:158.5px;width:600px;text-align:center;top:666.10px;font-size:14.3px;line-height:14.3px;color:#000;">Vol2 dB</div><div style="left:434px;top:633.5px;width:49px;height:28.7px;background:#fff;box-sizing:border-box;border-top:2px solid #808080;border-left:2px solid #808080;border-right:2px solid #fff;border-bottom:2px solid #fff;"></div><div class="t" style="left:158.5px;width:600px;text-align:center;top:639.09px;font-size:18px;line-height:18px;color:#b8b8b8;">80</div><div style="left:434px;top:681.4px;width:49px;height:28.6px;background:#fff;box-sizing:border-box;border-top:2px solid #808080;border-left:2px solid #808080;border-right:2px solid #fff;border-bottom:2px solid #fff;"></div><div class="t" style="left:158.5px;width:600px;text-align:center;top:686.94px;font-size:18px;line-height:18px;color:#b8b8b8;">80</div><div class="t" style="left:298.6px;width:600px;text-align:center;top:635.46px;font-size:16px;line-height:16px;font-weight:bold;color:#000;">Master Volume dB</div><div style="left:586.2px;top:665px;width:48.5px;height:29px;background:#000;box-sizing:border-box;border-top:2px solid #808080;border-left:2px solid #808080;border-right:2px solid #fff;border-bottom:2px solid #fff;"></div><div class="t" style="left:310.45000000000005px;width:600px;text-align:center;top:670.74px;font-size:18px;line-height:18px;color:#ffff00;">40</div><div class="t" style="left:847px;top:623.02px;font-size:21px;line-height:21px;font-weight:bold;color:#0d56a0;font-style:italic;transform:scaleX(0.9);transform-origin:left;-webkit-text-stroke:0.5px #0d56a0;">STEALTH</div><div class="t" style="left:848px;top:642.38px;font-size:22px;line-height:22px;color:#1a1a1a;transform:scaleX(1.12);transform-origin:left;-webkit-text-stroke:0.4px #c0c0c0;">SIGNAL</div><div class="t" style="left:848px;top:662.78px;font-size:22px;line-height:22px;color:#1a1a1a;transform:scaleX(1.10);transform-origin:left;-webkit-text-stroke:0.4px #c0c0c0;">MANAGEMENT</div><div class="t" style="left:848px;top:682.68px;font-size:22px;line-height:22px;color:#1a1a1a;transform:scaleX(1.06);transform-origin:left;-webkit-text-stroke:0.4px #c0c0c0;">SYSTEM</div>
<svg width="1053" height="719" style="z-index:3;pointer-events:none"><defs>
<radialGradient id="gr" cx="0.37" cy="0.37" fx="0.37" fy="0.37" r="0.7"><stop offset="0" stop-color="#ffffff"/><stop offset="0.16" stop-color="#ececec"/><stop offset="0.45" stop-color="#8a8a8a"/><stop offset="0.75" stop-color="#383838"/><stop offset="1" stop-color="#101010"/></radialGradient>
<radialGradient id="gl" cx="0.6" cy="0.38" fx="0.6" fy="0.38" r="0.7"><stop offset="0" stop-color="#ffffff"/><stop offset="0.16" stop-color="#ececec"/><stop offset="0.45" stop-color="#8a8a8a"/><stop offset="0.75" stop-color="#383838"/><stop offset="1" stop-color="#101010"/></radialGradient>
<radialGradient id="gu" cx="0.37" cy="0.63" fx="0.37" fy="0.63" r="0.7"><stop offset="0" stop-color="#ffffff"/><stop offset="0.16" stop-color="#ececec"/><stop offset="0.45" stop-color="#8a8a8a"/><stop offset="0.75" stop-color="#383838"/><stop offset="1" stop-color="#101010"/></radialGradient>
<radialGradient id="gd" cx="0.63" cy="0.37" fx="0.63" fy="0.37" r="0.7"><stop offset="0" stop-color="#ffffff"/><stop offset="0.16" stop-color="#ececec"/><stop offset="0.45" stop-color="#8a8a8a"/><stop offset="0.75" stop-color="#383838"/><stop offset="1" stop-color="#101010"/></radialGradient>
<linearGradient id="dk" x1="0" y1="0" x2="0" y2="1"><stop offset="0" stop-color="#000" stop-opacity="0"/><stop offset="0.5" stop-color="#000" stop-opacity="0"/><stop offset="1" stop-color="#000" stop-opacity="0.45"/></linearGradient>
<linearGradient id="dkr" x1="0" y1="0" x2="1" y2="0"><stop offset="0.45" stop-color="#000" stop-opacity="0"/><stop offset="1" stop-color="#000" stop-opacity="0.5"/></linearGradient>
<linearGradient id="dkl" x1="1" y1="0" x2="0" y2="0"><stop offset="0.45" stop-color="#000" stop-opacity="0"/><stop offset="1" stop-color="#000" stop-opacity="0.5"/></linearGradient>
<linearGradient id="thh" x1="0" y1="0" x2="1" y2="0"><stop offset="0" stop-color="#b0b0b0"/><stop offset="0.1" stop-color="#d8d8d8"/><stop offset="0.9" stop-color="#d8d8d8"/><stop offset="1" stop-color="#b0b0b0"/></linearGradient>
<linearGradient id="thw" x1="0" y1="0" x2="0" y2="1"><stop offset="0" stop-color="#d0d0d0"/><stop offset="0.3" stop-color="#ffffff"/><stop offset="0.7" stop-color="#f4f4f4"/><stop offset="1" stop-color="#c0c0c0"/></linearGradient>
<linearGradient id="tvc" x1="0" y1="0" x2="0" y2="1"><stop offset="0" stop-color="#c8c8c8"/><stop offset="0.12" stop-color="#ffffff"/><stop offset="0.5" stop-color="#f0f0f0"/><stop offset="0.75" stop-color="#ffffff"/><stop offset="0.9" stop-color="#e8e8e8"/><stop offset="1" stop-color="#b8b8b8"/></linearGradient>
<linearGradient id="tvh" x1="0" y1="0" x2="1" y2="0"><stop offset="0" stop-color="#707070"/><stop offset="0.2" stop-color="#e8e8e8"/><stop offset="0.5" stop-color="#ffffff"/><stop offset="0.8" stop-color="#e0e0e0"/><stop offset="1" stop-color="#606060"/></linearGradient>
</defs><polygon points="729.7,160.7 739.1,144.7 744.8000000000001,144.7 754.2,160.7" fill="url(#gu)"/><polygon points="729.7,160.7 739.1,144.7 744.8000000000001,144.7 754.2,160.7" fill="url(#dkr)"/><path d="M730.2,160.1 L739.1,145.29999999999998 M744.8000000000001,145.29999999999998 L753.7,160.1" stroke="#000" stroke-width="1.4" fill="none" stroke-linejoin="miter"/><polygon points="729.7,320.7 754.2,320.7 744.8000000000001,336.7 739.1,336.7" fill="url(#gd)"/><polygon points="729.7,320.7 754.2,320.7 744.8000000000001,336.7 739.1,336.7" fill="url(#dkl)"/><path d="M730.2,321.3 L739.1,336.09999999999997 M753.7,321.3 L744.8000000000001,336.09999999999997" stroke="#000" stroke-width="1.4" fill="none" stroke-linejoin="miter"/><polygon points="793.7,160.7 803.1,144.7 808.8000000000001,144.7 818.2,160.7" fill="url(#gu)"/><polygon points="793.7,160.7 803.1,144.7 808.8000000000001,144.7 818.2,160.7" fill="url(#dkr)"/><path d="M794.2,160.1 L803.1,145.29999999999998 M808.8000000000001,145.29999999999998 L817.7,160.1" stroke="#000" stroke-width="1.4" fill="none" stroke-linejoin="miter"/><polygon points="793.7,320.7 818.2,320.7 808.8000000000001,336.7 803.1,336.7" fill="url(#gd)"/><polygon points="793.7,320.7 818.2,320.7 808.8000000000001,336.7 803.1,336.7" fill="url(#dkl)"/><path d="M794.2,321.3 L803.1,336.09999999999997 M817.7,321.3 L808.8000000000001,336.09999999999997" stroke="#000" stroke-width="1.4" fill="none" stroke-linejoin="miter"/><polygon points="849.9,160.7 859.3,144.7 865.0,144.7 874.4,160.7" fill="url(#gu)"/><polygon points="849.9,160.7 859.3,144.7 865.0,144.7 874.4,160.7" fill="url(#dkr)"/><path d="M850.4,160.1 L859.3,145.29999999999998 M865.0,145.29999999999998 L873.9,160.1" stroke="#000" stroke-width="1.4" fill="none" stroke-linejoin="miter"/><polygon points="849.9,320.7 874.4,320.7 865.0,336.7 859.3,336.7" fill="url(#gd)"/><polygon points="849.9,320.7 874.4,320.7 865.0,336.7 859.3,336.7" fill="url(#dkl)"/><path d="M850.4,321.3 L859.3,336.09999999999997 M873.9,321.3 L865.0,336.09999999999997" stroke="#000" stroke-width="1.4" fill="none" stroke-linejoin="miter"/><polygon points="913.3,160.7 922.6999999999999,144.7 928.4,144.7 937.8,160.7" fill="url(#gu)"/><polygon points="913.3,160.7 922.6999999999999,144.7 928.4,144.7 937.8,160.7" fill="url(#dkr)"/><path d="M913.8,160.1 L922.6999999999999,145.29999999999998 M928.4,145.29999999999998 L937.3,160.1" stroke="#000" stroke-width="1.4" fill="none" stroke-linejoin="miter"/><polygon points="913.3,320.7 937.8,320.7 928.4,336.7 922.6999999999999,336.7" fill="url(#gd)"/><polygon points="913.3,320.7 937.8,320.7 928.4,336.7 922.6999999999999,336.7" fill="url(#dkl)"/><path d="M913.8,321.3 L922.6999999999999,336.09999999999997 M937.3,321.3 L928.4,336.09999999999997" stroke="#000" stroke-width="1.4" fill="none" stroke-linejoin="miter"/><polygon points="969.6,160.7 979.0,144.7 984.7,144.7 994.1,160.7" fill="url(#gu)"/><polygon points="969.6,160.7 979.0,144.7 984.7,144.7 994.1,160.7" fill="url(#dkr)"/><path d="M970.1,160.1 L979.0,145.29999999999998 M984.7,145.29999999999998 L993.6,160.1" stroke="#000" stroke-width="1.4" fill="none" stroke-linejoin="miter"/><polygon points="969.6,320.7 994.1,320.7 984.7,336.7 979.0,336.7" fill="url(#gd)"/><polygon points="969.6,320.7 994.1,320.7 984.7,336.7 979.0,336.7" fill="url(#dkl)"/><path d="M970.1,321.3 L979.0,336.09999999999997 M993.6,321.3 L984.7,336.09999999999997" stroke="#000" stroke-width="1.4" fill="none" stroke-linejoin="miter"/><rect x="734" y="169.2" width="17" height="37.5" rx="1" fill="url(#tvc)"/><rect x="735" y="176.10" width="15" height="1.50" fill="#383838"/><rect x="735" y="180.00" width="15" height="1.30" fill="#383838"/><rect x="735" y="183.70" width="15" height="1.30" fill="#383838"/><rect x="735" y="185.60" width="15" height="2.40" fill="#8a8a8a"/><rect x="735" y="188.60" width="15" height="1.20" fill="#383838"/><rect x="735" y="192.60" width="15" height="1.10" fill="#383838"/><rect x="735" y="196.00" width="15" height="1.10" fill="#383838"/><rect x="734.5" y="186.30" width="1.5" height="1.2" fill="#000"/><rect x="749" y="186.30" width="1.5" height="1.2" fill="#000"/><rect x="734" y="170.7" width="1.4" height="34.5" fill="#3a3a3a"/><rect x="749.6" y="170.7" width="1.4" height="34.5" fill="#3a3a3a"/><rect x="736" y="169.2" width="13" height="0.8" fill="#909090"/><rect x="736" y="205.89999999999998" width="13" height="0.8" fill="#909090"/><rect x="797" y="257" width="17" height="37.5" rx="1" fill="url(#tvc)"/><rect x="798" y="263.90" width="15" height="1.50" fill="#383838"/><rect x="798" y="267.80" width="15" height="1.30" fill="#383838"/><rect x="798" y="271.50" width="15" height="1.30" fill="#383838"/><rect x="798" y="273.40" width="15" height="2.40" fill="#8a8a8a"/><rect x="798" y="276.40" width="15" height="1.20" fill="#383838"/><rect x="798" y="280.40" width="15" height="1.10" fill="#383838"/><rect x="798" y="283.80" width="15" height="1.10" fill="#383838"/><rect x="797.5" y="274.10" width="1.5" height="1.2" fill="#000"/><rect x="812" y="274.10" width="1.5" height="1.2" fill="#000"/><rect x="797" y="258.5" width="1.4" height="34.5" fill="#3a3a3a"/><rect x="812.6" y="258.5" width="1.4" height="34.5" fill="#3a3a3a"/><rect x="799" y="257" width="13" height="0.8" fill="#909090"/><rect x="799" y="293.7" width="13" height="0.8" fill="#909090"/><rect x="854" y="242.5" width="17" height="37.5" rx="1" fill="url(#tvc)"/><rect x="855" y="249.40" width="15" height="1.50" fill="#383838"/><rect x="855" y="253.30" width="15" height="1.30" fill="#383838"/><rect x="855" y="257.00" width="15" height="1.30" fill="#383838"/><rect x="855" y="258.90" width="15" height="2.40" fill="#8a8a8a"/><rect x="855" y="261.90" width="15" height="1.20" fill="#383838"/><rect x="855" y="265.90" width="15" height="1.10" fill="#383838"/><rect x="855" y="269.30" width="15" height="1.10" fill="#383838"/><rect x="854.5" y="259.60" width="1.5" height="1.2" fill="#000"/><rect x="869" y="259.60" width="1.5" height="1.2" fill="#000"/><rect x="854" y="244.0" width="1.4" height="34.5" fill="#3a3a3a"/><rect x="869.6" y="244.0" width="1.4" height="34.5" fill="#3a3a3a"/><rect x="856" y="242.5" width="13" height="0.8" fill="#909090"/><rect x="856" y="279.2" width="13" height="0.8" fill="#909090"/><rect x="918" y="169" width="17" height="37.5" rx="1" fill="url(#tvc)"/><rect x="919" y="175.90" width="15" height="1.50" fill="#383838"/><rect x="919" y="179.80" width="15" height="1.30" fill="#383838"/><rect x="919" y="183.50" width="15" height="1.30" fill="#383838"/><rect x="919" y="185.40" width="15" height="2.40" fill="#8a8a8a"/><rect x="919" y="188.40" width="15" height="1.20" fill="#383838"/><rect x="919" y="192.40" width="15" height="1.10" fill="#383838"/><rect x="919" y="195.80" width="15" height="1.10" fill="#383838"/><rect x="918.5" y="186.10" width="1.5" height="1.2" fill="#000"/><rect x="933" y="186.10" width="1.5" height="1.2" fill="#000"/><rect x="918" y="170.5" width="1.4" height="34.5" fill="#3a3a3a"/><rect x="933.6" y="170.5" width="1.4" height="34.5" fill="#3a3a3a"/><rect x="920" y="169" width="13" height="0.8" fill="#909090"/><rect x="920" y="205.7" width="13" height="0.8" fill="#909090"/><rect x="974" y="275" width="17" height="37.5" rx="1" fill="url(#tvc)"/><rect x="975" y="281.90" width="15" height="1.50" fill="#383838"/><rect x="975" y="285.80" width="15" height="1.30" fill="#383838"/><rect x="975" y="289.50" width="15" height="1.30" fill="#383838"/><rect x="975" y="291.40" width="15" height="2.40" fill="#8a8a8a"/><rect x="975" y="294.40" width="15" height="1.20" fill="#383838"/><rect x="975" y="298.40" width="15" height="1.10" fill="#383838"/><rect x="975" y="301.80" width="15" height="1.10" fill="#383838"/><rect x="974.5" y="292.10" width="1.5" height="1.2" fill="#000"/><rect x="989" y="292.10" width="1.5" height="1.2" fill="#000"/><rect x="974" y="276.5" width="1.4" height="34.5" fill="#3a3a3a"/><rect x="989.6" y="276.5" width="1.4" height="34.5" fill="#3a3a3a"/><rect x="976" y="275" width="13" height="0.8" fill="#909090"/><rect x="976" y="311.7" width="13" height="0.8" fill="#909090"/><polygon points="458.7,384.3 441.7,394.05 441.7,399.25000000000006 458.7,409.0" fill="url(#gl)"/><polygon points="458.7,384.3 441.7,394.05 441.7,399.25000000000006 458.7,409.0" fill="url(#dk)"/><path d="M458.09999999999997,384.8 L442.3,394.05 L442.3,399.25000000000006 L458.09999999999997,408.5" stroke="#000" stroke-width="1.4" fill="none" stroke-linejoin="miter"/><polygon points="529.9,384.3 546.9,394.05 546.9,399.25000000000006 529.9,409.0" fill="url(#gr)"/><polygon points="529.9,384.3 546.9,394.05 546.9,399.25000000000006 529.9,409.0" fill="url(#dk)"/><path d="M530.5,384.8 L546.3,394.05 L546.3,399.25000000000006 L530.5,408.5" stroke="#000" stroke-width="1.4" fill="none" stroke-linejoin="miter"/><polygon points="385.9,432.8 369.7,442.3 369.7,447.50000000000006 385.9,457.0" fill="url(#gl)"/><polygon points="385.9,432.8 369.7,442.3 369.7,447.50000000000006 385.9,457.0" fill="url(#dk)"/><path d="M385.29999999999995,433.3 L370.3,442.3 L370.3,447.50000000000006 L385.29999999999995,456.5" stroke="#000" stroke-width="1.4" fill="none" stroke-linejoin="miter"/><polygon points="593.8,432.8 610.3,442.3 610.3,447.50000000000006 593.8,457.0" fill="url(#gr)"/><polygon points="593.8,432.8 610.3,442.3 610.3,447.50000000000006 593.8,457.0" fill="url(#dk)"/><path d="M594.4,433.3 L609.6999999999999,442.3 L609.6999999999999,447.50000000000006 L594.4,456.5" stroke="#000" stroke-width="1.4" fill="none" stroke-linejoin="miter"/><rect x="419.8" y="437.2" width="37.5" height="16" fill="#d6d6d6"/><rect x="423.8" y="437.7" width="30.0" height="15" fill="url(#thw)"/><rect x="429.60" y="437.7" width="1.20" height="15" fill="#383838"/><rect x="433.20" y="437.7" width="1.10" height="15" fill="#383838"/><rect x="436.40" y="437.7" width="1.00" height="15" fill="#383838"/><rect x="438.60" y="437.7" width="1.90" height="15" fill="#888888"/><rect x="441.70" y="437.7" width="1.40" height="15" fill="#383838"/><rect x="445.50" y="437.7" width="1.20" height="15" fill="#383838"/><rect x="448.80" y="437.7" width="1.60" height="15" fill="#383838"/><rect x="439.00" y="437.3" width="1.2" height="1.5" fill="#000"/><rect x="439.00" y="451.59999999999997" width="1.2" height="1.5" fill="#000"/><rect x="421.3" y="436.7" width="34.5" height="1.3" fill="#3a3a3a"/><rect x="421.3" y="452.4" width="34.5" height="1.3" fill="#3a3a3a"/><polygon points="385.9,493.2 369.7,502.7 369.7,507.90000000000003 385.9,517.4" fill="url(#gl)"/><polygon points="385.9,493.2 369.7,502.7 369.7,507.90000000000003 385.9,517.4" fill="url(#dk)"/><path d="M385.29999999999995,493.7 L370.3,502.7 L370.3,507.90000000000003 L385.29999999999995,516.9" stroke="#000" stroke-width="1.4" fill="none" stroke-linejoin="miter"/><polygon points="593.8,493.2 610.3,502.7 610.3,507.90000000000003 593.8,517.4" fill="url(#gr)"/><polygon points="593.8,493.2 610.3,502.7 610.3,507.90000000000003 593.8,517.4" fill="url(#dk)"/><path d="M594.4,493.7 L609.6999999999999,502.7 L609.6999999999999,507.90000000000003 L594.4,516.9" stroke="#000" stroke-width="1.4" fill="none" stroke-linejoin="miter"/><rect x="442" y="497.5" width="37.5" height="16" fill="#d6d6d6"/><rect x="446.0" y="498" width="30.0" height="15" fill="url(#thw)"/><rect x="451.80" y="498" width="1.20" height="15" fill="#383838"/><rect x="455.40" y="498" width="1.10" height="15" fill="#383838"/><rect x="458.60" y="498" width="1.00" height="15" fill="#383838"/><rect x="460.80" y="498" width="1.90" height="15" fill="#888888"/><rect x="463.90" y="498" width="1.40" height="15" fill="#383838"/><rect x="467.70" y="498" width="1.20" height="15" fill="#383838"/><rect x="471.00" y="498" width="1.60" height="15" fill="#383838"/><rect x="461.20" y="497.6" width="1.2" height="1.5" fill="#000"/><rect x="461.20" y="511.9" width="1.2" height="1.5" fill="#000"/><rect x="443.5" y="497" width="34.5" height="1.3" fill="#3a3a3a"/><rect x="443.5" y="512.7" width="34.5" height="1.3" fill="#3a3a3a"/><polygon points="385.9,558 369.7,567.5 369.7,572.7 385.9,582.2" fill="url(#gl)"/><polygon points="385.9,558 369.7,567.5 369.7,572.7 385.9,582.2" fill="url(#dk)"/><path d="M385.29999999999995,558.5 L370.3,567.5 L370.3,572.7 L385.29999999999995,581.7" stroke="#000" stroke-width="1.4" fill="none" stroke-linejoin="miter"/><polygon points="593.8,558 610.3,567.5 610.3,572.7 593.8,582.2" fill="url(#gr)"/><polygon points="593.8,558 610.3,567.5 610.3,572.7 593.8,582.2" fill="url(#dk)"/><path d="M594.4,558.5 L609.6999999999999,567.5 L609.6999999999999,572.7 L594.4,581.7" stroke="#000" stroke-width="1.4" fill="none" stroke-linejoin="miter"/><rect x="439.3" y="561.5" width="37.5" height="16" fill="#d6d6d6"/><rect x="443.3" y="562" width="30.0" height="15" fill="url(#thw)"/><rect x="449.10" y="562" width="1.20" height="15" fill="#383838"/><rect x="452.70" y="562" width="1.10" height="15" fill="#383838"/><rect x="455.90" y="562" width="1.00" height="15" fill="#383838"/><rect x="458.10" y="562" width="1.90" height="15" fill="#888888"/><rect x="461.20" y="562" width="1.40" height="15" fill="#383838"/><rect x="465.00" y="562" width="1.20" height="15" fill="#383838"/><rect x="468.30" y="562" width="1.60" height="15" fill="#383838"/><rect x="458.50" y="561.6" width="1.2" height="1.5" fill="#000"/><rect x="458.50" y="575.9" width="1.2" height="1.5" fill="#000"/><rect x="440.8" y="561" width="34.5" height="1.3" fill="#3a3a3a"/><rect x="440.8" y="576.7" width="34.5" height="1.3" fill="#3a3a3a"/><polygon points="713.9000000000001,424.8 697.7,434.45 697.7,439.65000000000003 713.9000000000001,449.3" fill="url(#gl)"/><polygon points="713.9000000000001,424.8 697.7,434.45 697.7,439.65000000000003 713.9000000000001,449.3" fill="url(#dk)"/><path d="M713.3000000000001,425.3 L698.3000000000001,434.45 L698.3000000000001,439.65000000000003 L713.3000000000001,448.8" stroke="#000" stroke-width="1.4" fill="none" stroke-linejoin="miter"/><polygon points="913.1,424.8 929.3000000000001,434.45 929.3000000000001,439.65000000000003 913.1,449.3" fill="url(#gr)"/><polygon points="913.1,424.8 929.3000000000001,434.45 929.3000000000001,439.65000000000003 913.1,449.3" fill="url(#dk)"/><path d="M913.7,425.3 L928.7,434.45 L928.7,439.65000000000003 L913.7,448.8" stroke="#000" stroke-width="1.4" fill="none" stroke-linejoin="miter"/><rect x="732.4" y="428.5" width="37.5" height="16" fill="#d6d6d6"/><rect x="736.4" y="429" width="30.0" height="15" fill="url(#thw)"/><rect x="742.20" y="429" width="1.20" height="15" fill="#383838"/><rect x="745.80" y="429" width="1.10" height="15" fill="#383838"/><rect x="749.00" y="429" width="1.00" height="15" fill="#383838"/><rect x="751.20" y="429" width="1.90" height="15" fill="#888888"/><rect x="754.30" y="429" width="1.40" height="15" fill="#383838"/><rect x="758.10" y="429" width="1.20" height="15" fill="#383838"/><rect x="761.40" y="429" width="1.60" height="15" fill="#383838"/><rect x="751.60" y="428.6" width="1.2" height="1.5" fill="#000"/><rect x="751.60" y="442.9" width="1.2" height="1.5" fill="#000"/><rect x="733.9" y="428" width="34.5" height="1.3" fill="#3a3a3a"/><rect x="733.9" y="443.7" width="34.5" height="1.3" fill="#3a3a3a"/><polygon points="713.9000000000001,549.8 697.7,559.4499999999999 697.7,564.65 713.9000000000001,574.3" fill="url(#gl)"/><polygon points="713.9000000000001,549.8 697.7,559.4499999999999 697.7,564.65 713.9000000000001,574.3" fill="url(#dk)"/><path d="M713.3000000000001,550.3 L698.3000000000001,559.4499999999999 L698.3000000000001,564.65 L713.3000000000001,573.8" stroke="#000" stroke-width="1.4" fill="none" stroke-linejoin="miter"/><polygon points="913.1,549.8 929.3000000000001,559.4499999999999 929.3000000000001,564.65 913.1,574.3" fill="url(#gr)"/><polygon points="913.1,549.8 929.3000000000001,559.4499999999999 929.3000000000001,564.65 913.1,574.3" fill="url(#dk)"/><path d="M913.7,550.3 L928.7,559.4499999999999 L928.7,564.65 L913.7,573.8" stroke="#000" stroke-width="1.4" fill="none" stroke-linejoin="miter"/><rect x="727.3" y="553.5" width="37.5" height="16" fill="#d6d6d6"/><rect x="731.3" y="554" width="30.0" height="15" fill="url(#thw)"/><rect x="737.10" y="554" width="1.20" height="15" fill="#383838"/><rect x="740.70" y="554" width="1.10" height="15" fill="#383838"/><rect x="743.90" y="554" width="1.00" height="15" fill="#383838"/><rect x="746.10" y="554" width="1.90" height="15" fill="#888888"/><rect x="749.20" y="554" width="1.40" height="15" fill="#383838"/><rect x="753.00" y="554" width="1.20" height="15" fill="#383838"/><rect x="756.30" y="554" width="1.60" height="15" fill="#383838"/><rect x="746.50" y="553.6" width="1.2" height="1.5" fill="#000"/><rect x="746.50" y="567.9" width="1.2" height="1.5" fill="#000"/><rect x="728.8" y="553" width="34.5" height="1.3" fill="#3a3a3a"/><rect x="728.8" y="568.7" width="34.5" height="1.3" fill="#3a3a3a"/><polygon points="1004.8,434 1012.2,434 1008.5,438.3" fill="#000"/><polygon points="1004.8,562 1012.2,562 1008.5,566.3" fill="#000"/><polygon points="65.8,633 49.6,642.4 49.6,647.6 65.8,657" fill="url(#gl)"/><polygon points="65.8,633 49.6,642.4 49.6,647.6 65.8,657" fill="url(#dk)"/><path d="M65.2,633.5 L50.2,642.4 L50.2,647.6 L65.2,656.5" stroke="#000" stroke-width="1.4" fill="none" stroke-linejoin="miter"/><polygon points="129.9,633 146.1,642.4 146.1,647.6 129.9,657" fill="url(#gr)"/><polygon points="129.9,633 146.1,642.4 146.1,647.6 129.9,657" fill="url(#dk)"/><path d="M130.5,633.5 L145.5,642.4 L145.5,647.6 L130.5,656.5" stroke="#000" stroke-width="1.4" fill="none" stroke-linejoin="miter"/><polygon points="250.29999999999998,633 234.1,642.4 234.1,647.6 250.29999999999998,657" fill="url(#gl)"/><polygon points="250.29999999999998,633 234.1,642.4 234.1,647.6 250.29999999999998,657" fill="url(#dk)"/><path d="M249.7,633.5 L234.7,642.4 L234.7,647.6 L249.7,656.5" stroke="#000" stroke-width="1.4" fill="none" stroke-linejoin="miter"/><polygon points="313.9,633 330.09999999999997,642.4 330.09999999999997,647.6 313.9,657" fill="url(#gr)"/><polygon points="313.9,633 330.09999999999997,642.4 330.09999999999997,647.6 313.9,657" fill="url(#dk)"/><path d="M314.5,633.5 L329.49999999999994,642.4 L329.49999999999994,647.6 L314.5,656.5" stroke="#000" stroke-width="1.4" fill="none" stroke-linejoin="miter"/><polygon points="578.3,666.7 561.5,675.6 561.5,680.8000000000001 578.3,689.7" fill="url(#gl)"/><polygon points="578.3,666.7 561.5,675.6 561.5,680.8000000000001 578.3,689.7" fill="url(#dk)"/><path d="M577.6999999999999,667.2 L562.1,675.6 L562.1,680.8000000000001 L577.6999999999999,689.2" stroke="#000" stroke-width="1.4" fill="none" stroke-linejoin="miter"/><polygon points="641.9,666.7 658.6999999999999,675.6 658.6999999999999,680.8000000000001 641.9,689.7" fill="url(#gr)"/><polygon points="641.9,666.7 658.6999999999999,675.6 658.6999999999999,680.8000000000001 641.9,689.7" fill="url(#dk)"/><path d="M642.5,667.2 L658.0999999999999,675.6 L658.0999999999999,680.8000000000001 L642.5,689.2" stroke="#000" stroke-width="1.4" fill="none" stroke-linejoin="miter"/><path d="M725,628 Q725,618 735,618 L829,618 Q839,618 839,628 L839,696 Q839,710 825,710 L723,710 L723,620 Z" fill="#fff"/><path d="M725.6,629.5 Q725.6,620.3 734.8,620.3 L827.5,620.3 Q837.4,620.3 837.4,630 L837.4,694 Q837.4,707.7 823.7,707.7 L725.6,707.7 Z" fill="#0c5a9c"/><path transform="translate(735.3,627.1)" d="M43.8,0 L6.5,0 Q0,0 0,6.5 L0,13 Q0,19.4 6.5,19.4 L31,19.4 Q35.4,19.4 35.4,23.8 L35.4,26.4 Q35.4,30.8 31,30.8 L4.2,30.8 L0,29 L0,34.7 L37.3,34.7 Q43.8,34.7 43.8,28.2 L43.8,21.7 Q43.8,15.3 37.3,15.3 L12.6,15.3 Q8.2,15.3 8.2,10.9 L8.2,8.3 Q8.2,3.9 12.6,3.9 L39.6,3.9 L43.8,5.7 Z" fill="#fff"/><path transform="translate(784,627.1)" d="M43.8,0 L6.5,0 Q0,0 0,6.5 L0,13 Q0,19.4 6.5,19.4 L31,19.4 Q35.4,19.4 35.4,23.8 L35.4,26.4 Q35.4,30.8 31,30.8 L4.2,30.8 L0,29 L0,34.7 L37.3,34.7 Q43.8,34.7 43.8,28.2 L43.8,21.7 Q43.8,15.3 37.3,15.3 L12.6,15.3 Q8.2,15.3 8.2,10.9 L8.2,8.3 Q8.2,3.9 12.6,3.9 L39.6,3.9 L43.8,5.7 Z" fill="#fff"/><path transform="translate(784,666.2)" d="M43.8,0 L6.5,0 Q0,0 0,6.5 L0,13 Q0,19.4 6.5,19.4 L31,19.4 Q35.4,19.4 35.4,23.8 L35.4,26.4 Q35.4,30.8 31,30.8 L4.2,30.8 L0,29 L0,34.7 L37.3,34.7 Q43.8,34.7 43.8,28.2 L43.8,21.7 Q43.8,15.3 37.3,15.3 L12.6,15.3 Q8.2,15.3 8.2,10.9 L8.2,8.3 Q8.2,3.9 12.6,3.9 L39.6,3.9 L43.8,5.7 Z" fill="#fff"/><path transform="translate(733.8,666.1)" d="M1,0 L9.6,0 L22.4,27.8 L35.2,0 L44.5,0 L43.8,3 L43.8,31 L45,34.9 L35.5,34.9 L37.1,31 L37.1,8 L26.2,34.9 L18.6,34.9 L7.4,7.7 L7.4,31 L9.5,34.9 L0,34.9 L1,31 L1,3 Z" fill="#fff"/></svg>
</body></html>
